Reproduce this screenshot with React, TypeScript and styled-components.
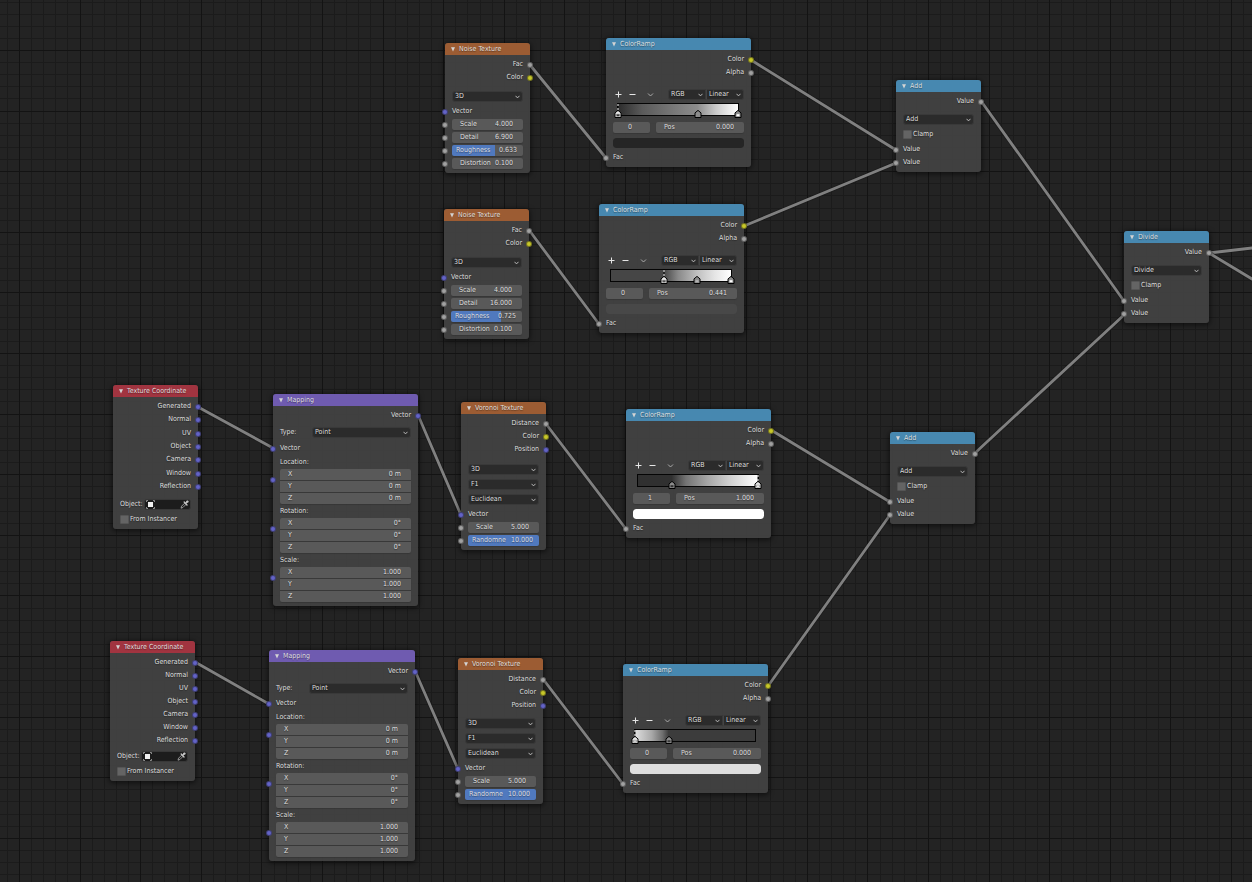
import React, { useState } from 'react';
import styled, { createGlobalStyle, css } from 'styled-components';

const GlobalStyle = createGlobalStyle`
  *, *::before, *::after { box-sizing: border-box; }
  html, body { margin: 0; padding: 0; background: #232323; }
  body, button, input, select {
    font-family: "DejaVu Sans Condensed", "DejaVu Sans", sans-serif;
    font-size: 7px;
    line-height: 9px;
    color: #dedede;
  }
  button, input, select { margin: 0; padding: 0; border: 0; background: none; border-radius: 0; }
`;

const palette = {
  texture: '#9c5c33',
  converter: '#4788b0',
  input: '#a13440',
  vector: '#6f5bb0',
  value: '#a1a1a1',
  color: '#c7c729',
  vec: '#6363c7',
};

type SocketKind = 'value' | 'color' | 'vec';

/* ---------- canvas ---------- */

const Canvas = styled.main`
  position: relative;
  width: 100%;
  min-height: 100vh;
  overflow: hidden;
  background: #232323;
`;

const Backdrop = styled.svg`
  position: absolute;
  inset: 0;
  width: 100%;
  height: 100%;
`;

const NodeFrame = styled.section<{ $x: number; $y: number; $w: number }>`
  position: absolute;
  left: ${p => p.$x}px;
  top: ${p => p.$y}px;
  width: ${p => p.$w}px;
  border-radius: 3px;
  background: rgba(66, 66, 66, 0.94);
  box-shadow: 0 1px 5px 1px rgba(0, 0, 0, 0.55);
  text-shadow: 0 1px 1px rgba(0, 0, 0, 0.4);
`;

const NodeHeader = styled.header<{ $color: string }>`
  display: flex;
  align-items: center;
  gap: 3px;
  height: 12px;
  padding-left: 5px;
  border-radius: 3px 3px 0 0;
  background: ${p => p.$color};
`;

const NodeTitle = styled.h2`
  margin: 0;
  font-size: 7px;
  font-weight: 400;
  white-space: nowrap;
`;

const CollapseButton = styled.button`
  display: flex;
  width: 6px;
  height: 6px;
  svg { width: 6px; height: 6px; }
`;

const NodeBody = styled.div`
  display: flex;
  flex-direction: column;
  padding: 3px 7px;
`;

const OutputList = styled.div<{ $height?: number; $gap: number }>`
  display: flex;
  flex-direction: column;
  justify-content: space-between;
  height: ${p => (p.$height ? `${p.$height}px` : 'auto')};
  margin-bottom: ${p => p.$gap}px;
`;

const Row = styled.div<{ $end?: boolean; $after?: number }>`
  position: relative;
  display: flex;
  flex: none;
  align-items: center;
  justify-content: ${p => (p.$end ? 'flex-end' : 'flex-start')};
  height: 13px;
  margin-bottom: ${p => p.$after ?? 0}px;
  white-space: nowrap;
`;

const GroupLabel = styled.div`
  display: flex;
  flex: none;
  align-items: center;
  height: 12px;
`;

const Socket = styled.i<{ $kind: SocketKind; $side: 'in' | 'out' }>`
  position: absolute;
  top: 4px;
  ${p => (p.$side === 'in' ? 'left: -10px;' : 'right: -10px;')}
  width: 6px;
  height: 6px;
  border: 1px solid rgba(20, 20, 20, 0.45);
  border-radius: 50%;
  background: ${p => palette[p.$kind]};
`;

/* ---------- fields ---------- */

const SelectBox = styled.span<{ $width?: string; $joined?: 'left' | 'right' }>`
  position: relative;
  display: flex;
  width: ${p => p.$width ?? '100%'};
  height: 11px;
  border: 1px solid #393939;
  border-radius: 3px;
  background: #2b2b2b;
  ${p => p.$joined === 'left' && css`border-radius: 3px 0 0 3px;`}
  ${p => p.$joined === 'right' && css`border-radius: 0 3px 3px 0; border-left-color: #444;`}
  svg {
    position: absolute;
    right: 2px;
    top: 3px;
    width: 5px;
    height: 4px;
    pointer-events: none;
  }
`;

const NativeSelect = styled.select`
  width: 100%;
  height: 9px;
  padding-left: 2px;
  appearance: none;
  outline: none;
  text-shadow: inherit;
`;

const FieldBox = styled.label<{ $fill?: number; $grouped?: boolean }>`
  display: flex;
  align-items: center;
  width: 100%;
  height: 11px;
  padding: ${p => (p.$fill ? '0 6px 0 4px' : '0 10px 0 8px')};
  border-radius: ${p => (p.$grouped ? 0 : 2)}px;
  background: ${p =>
    p.$fill
      ? `linear-gradient(90deg, #5079be ${p.$fill}%, #595959 ${p.$fill}%)`
      : '#595959'};
  box-shadow: 0 1px 1px rgba(0, 0, 0, 0.15);
  span { flex: none; }
`;

const FieldInput = styled.input<{ $center?: boolean }>`
  flex: 1;
  width: 0;
  min-width: 0;
  height: 9px;
  outline: none;
  text-align: ${p => (p.$center ? 'center' : 'right')};
  text-shadow: inherit;
`;

const IndexBox = styled(FieldBox)`
  flex: none;
  width: 37px;
  padding: 0 3px 0 0;
`;

const CheckLabel = styled.label`
  display: flex;
  align-items: center;
  gap: 1px;
`;

const CheckInput = styled.input`
  width: 9px;
  height: 9px;
  appearance: none;
  border: 1px solid #555;
  border-radius: 1px;
  background: #646464;
  &:checked { background: #5079be; }
`;

const VectorStack = styled.div`
  position: relative;
  display: flex;
  flex: none;
  flex-direction: column;
  gap: 1px;
  margin: 1px 0;
  border-radius: 2px;
  background: #424242;
  label:first-child { border-radius: 2px 2px 0 0; }
  label:nth-child(3) { border-radius: 0 0 2px 2px; }
`;

const StackSocket = styled(Socket)`
  top: 8px;
`;

const TypeName = styled.span`
  flex: 1;
`;

const ObjectLabel = styled.label`
  display: flex;
  align-items: center;
  justify-content: space-between;
  width: 100%;
`;

const ObjectBox = styled.span`
  display: flex;
  align-items: center;
  width: 47px;
  height: 11px;
  padding: 0 1px;
  border: 1px solid #383838;
  border-radius: 3px;
  background: #1c1c1c;
  svg { flex: none; width: 9px; height: 9px; }
`;

const Eyedropper = styled.button`
  display: flex;
  width: 9px;
  height: 9px;
`;

/* ---------- colour ramp ---------- */

const RampTools = styled.div`
  display: flex;
  align-items: center;
  height: 13px;
  margin-bottom: 2px;
`;

const ToolButton = styled.button<{ $gap?: number }>`
  display: flex;
  width: 9px;
  height: 9px;
  margin-left: ${p => p.$gap ?? 0}px;
  svg { width: 9px; height: 9px; }
`;

const RampSelects = styled.div`
  display: flex;
  width: 76px;
  margin-left: auto;
`;

const RampBar = styled.div<{ $gradient: string }>`
  position: relative;
  height: 13px;
  margin: 0 5px 6px 4px;
  border: 1px solid #050505;
  background: ${p => p.$gradient};
`;

const RampStop = styled.button<{ $at: number }>`
  position: absolute;
  left: calc(${p => p.$at}% - 4px);
  top: -1px;
  width: 8px;
  height: 17px;
  svg { display: block; width: 8px; height: 17px; }
`;

const RampFields = styled.div`
  display: flex;
  align-items: center;
  gap: 6px;
  height: 11px;
  margin-bottom: 5px;
`;

const Swatch = styled.input`
  display: block;
  width: 100%;
  height: 10px;
  margin-bottom: 3px;
  appearance: none;
  border-radius: 3px;
  overflow: hidden;
  &::-webkit-color-swatch-wrapper { padding: 0; }
  &::-webkit-color-swatch { border: 0; border-radius: 3px; }
`;

/* ---------- icons ---------- */

const Chevron = () => (
  <svg viewBox="0 0 5 4" aria-hidden="true">
    <path d="M0.5 0.8 2.5 2.9 4.5 0.8" fill="none" stroke="#c8c8c8" strokeWidth="0.9" />
  </svg>
);

const Triangle = () => (
  <svg viewBox="0 0 6 6" aria-hidden="true">
    <path d="M1 1.2h4L3 5.6z" fill="#d4d4d4" />
  </svg>
);

const ObjectIcon = () => (
  <svg viewBox="0 0 9 9" aria-hidden="true">
    <path d="M2 2h5v5H2z" fill="#f0f0f0" />
    <path d="M.5 2V.5H2M7 .5h1.5V2M8.5 7v1.5H7M2 8.5H.5V7" fill="none" stroke="#a8a8a8" strokeWidth="0.8" />
  </svg>
);

const DropperIcon = () => (
  <svg viewBox="0 0 9 9" aria-hidden="true">
    <path d="M1 8.2 1.6 6.2 4.6 3.2 5.9 4.5 2.9 7.5z" fill="none" stroke="#b4b4b4" strokeWidth="0.8" />
    <path d="M4.2 2.1 7 4.9M5.5 3.5 7.4 1.6" fill="none" stroke="#c4c4c4" strokeWidth="1.4" strokeLinecap="round" />
    <circle cx="7.4" cy="1.6" r="1.2" fill="#c4c4c4" />
  </svg>
);

/* ---------- building blocks ---------- */

interface NodeProps {
  title: string;
  color: string;
  x: number;
  y: number;
  w?: number;
  children: React.ReactNode;
}

function Node({ title, color, x, y, w = 85, children }: NodeProps) {
  return (
    <NodeFrame $x={x} $y={y} $w={w} aria-label={title}>
      <NodeHeader $color={color}>
        <CollapseButton type="button" aria-label={`Collapse ${title}`}>
          <Triangle />
        </CollapseButton>
        <NodeTitle>{title}</NodeTitle>
      </NodeHeader>
      <NodeBody>{children}</NodeBody>
    </NodeFrame>
  );
}

function Output({ name, kind }: { name: string; kind: SocketKind }) {
  return (
    <Row $end>
      {name}
      <Socket $kind={kind} $side="out" />
    </Row>
  );
}

function Input({ name, kind, after }: { name: string; kind: SocketKind; after?: number }) {
  return (
    <Row $after={after}>
      {name}
      <Socket $kind={kind} $side="in" />
    </Row>
  );
}

interface DropdownProps {
  label: string;
  value: string;
  width?: string;
  joined?: 'left' | 'right';
}

function Dropdown({ label, value, width, joined }: DropdownProps) {
  return (
    <SelectBox $width={width} $joined={joined}>
      <NativeSelect aria-label={label} defaultValue={value}>
        <option>{value}</option>
      </NativeSelect>
      <Chevron />
    </SelectBox>
  );
}

interface FieldProps {
  name: string;
  value: string;
  fill?: number;
  grouped?: boolean;
}

function Field({ name, value, fill, grouped }: FieldProps) {
  const [text, setText] = useState(value);
  return (
    <FieldBox $fill={fill} $grouped={grouped}>
      <span>{name}</span>
      <FieldInput value={text} onChange={e => setText(e.target.value)} />
    </FieldBox>
  );
}

function FieldInputRow(props: FieldProps) {
  return (
    <Row>
      <Field {...props} />
      <Socket $kind="value" $side="in" />
    </Row>
  );
}

/* ---------- nodes ---------- */

interface Place {
  x: number;
  y: number;
}

function NoiseNode({ x, y, detail, roughness, fill }: Place & { detail: string; roughness: string; fill: number }) {
  return (
    <Node title="Noise Texture" color={palette.texture} x={x} y={y}>
      <OutputList $gap={6}>
        <Output name="Fac" kind="value" />
        <Output name="Color" kind="color" />
      </OutputList>
      <Row $after={2}><Dropdown label="Dimensions" value="3D" /></Row>
      <Input name="Vector" kind="vec" />
      <FieldInputRow name="Scale" value="4.000" />
      <FieldInputRow name="Detail" value={detail} />
      <FieldInputRow name="Roughness" value={roughness} fill={fill} />
      <FieldInputRow name="Distortion" value="0.100" />
    </Node>
  );
}

function VoronoiNode({ x, y, gap }: Place & { gap: number }) {
  return (
    <Node title="Voronoi Texture" color={palette.texture} x={x} y={y}>
      <OutputList $gap={gap}>
        <Output name="Distance" kind="value" />
        <Output name="Color" kind="color" />
        <Output name="Position" kind="vec" />
      </OutputList>
      <Row $after={2}><Dropdown label="Dimensions" value="3D" /></Row>
      <Row $after={2}><Dropdown label="Feature" value="F1" /></Row>
      <Row $after={2}><Dropdown label="Distance metric" value="Euclidean" /></Row>
      <Input name="Vector" kind="vec" />
      <FieldInputRow name="Scale" value="5.000" />
      <FieldInputRow name="Randomne" value="10.000" fill={100} />
    </Node>
  );
}

function MathNode({ x, y, operation }: Place & { operation: string }) {
  return (
    <Node title={operation} color={palette.converter} x={x} y={y}>
      <OutputList $gap={5}>
        <Output name="Value" kind="value" />
      </OutputList>
      <Row $after={2}><Dropdown label="Operation" value={operation} /></Row>
      <Row $after={2}>
        <CheckLabel><CheckInput type="checkbox" />Clamp</CheckLabel>
      </Row>
      <Input name="Value" kind="value" />
      <Input name="Value" kind="value" />
    </Node>
  );
}

function TextureCoordinateNode({ x, y, outputHeight }: Place & { outputHeight: number }) {
  return (
    <Node title="Texture Coordinate" color={palette.input} x={x} y={y}>
      <OutputList $gap={5} $height={outputHeight}>
        {['Generated', 'Normal', 'UV', 'Object', 'Camera', 'Window', 'Reflection'].map(name => (
          <Output key={name} name={name} kind="vec" />
        ))}
      </OutputList>
      <Row $after={2}>
        <ObjectLabel>
          Object:
          <ObjectBox>
            <ObjectIcon />
            <FieldInput defaultValue="" />
            <Eyedropper type="button" aria-label="Pick object"><DropperIcon /></Eyedropper>
          </ObjectBox>
        </ObjectLabel>
      </Row>
      <Row>
        <CheckLabel><CheckInput type="checkbox" />From Instancer</CheckLabel>
      </Row>
    </Node>
  );
}

function VectorGroup({ name, values }: { name: string; values: string[] }) {
  return (
    <>
      <GroupLabel>{name}:</GroupLabel>
      <VectorStack>
        {['X', 'Y', 'Z'].map((axis, i) => (
          <Field key={axis} name={axis} value={values[i]} grouped />
        ))}
        <StackSocket $kind="vec" $side="in" />
      </VectorStack>
    </>
  );
}

function MappingNode({ x, y, w, typeGap }: Place & { w: number; typeGap: number }) {
  return (
    <Node title="Mapping" color={palette.vector} x={x} y={y} w={w}>
      <OutputList $gap={4}>
        <Output name="Vector" kind="vec" />
      </OutputList>
      <Row $after={typeGap}>
        <TypeName>Type:</TypeName>
        <Dropdown label="Type" value="Point" width="99px" />
      </Row>
      <Input name="Vector" kind="vec" after={1} />
      <VectorGroup name="Location" values={['0 m', '0 m', '0 m']} />
      <VectorGroup name="Rotation" values={['0°', '0°', '0°']} />
      <VectorGroup name="Scale" values={['1.000', '1.000', '1.000']} />
    </Node>
  );
}

interface Stop {
  at: number;
  color: string;
}

interface RampProps extends Place {
  index: number;
  pos: string;
  swatch: string;
  stops: Stop[];
  gradient: string;
}

function ColorRampNode({ x, y, index, pos, swatch, stops, gradient }: RampProps) {
  return (
    <Node title="ColorRamp" color={palette.converter} x={x} y={y} w={145}>
      <OutputList $gap={9}>
        <Output name="Color" kind="color" />
        <Output name="Alpha" kind="value" />
      </OutputList>
      <RampTools>
        <ToolButton type="button" $gap={1} aria-label="Add stop">
          <svg viewBox="0 0 9 9"><path d="M4.5 1.5v6M1.5 4.5h6" stroke="#e6e6e6" /></svg>
        </ToolButton>
        <ToolButton type="button" $gap={5} aria-label="Remove stop">
          <svg viewBox="0 0 9 9"><path d="M1.5 4.5h6" stroke="#e6e6e6" /></svg>
        </ToolButton>
        <ToolButton type="button" $gap={9} aria-label="Ramp tools">
          <svg viewBox="0 0 9 9"><path d="M2 3.5 4.5 6 7 3.5" fill="none" stroke="#b4b4b4" strokeWidth="0.9" /></svg>
        </ToolButton>
        <RampSelects>
          <Dropdown label="Color mode" value="RGB" width="38px" joined="left" />
          <Dropdown label="Interpolation" value="Linear" width="38px" joined="right" />
        </RampSelects>
      </RampTools>
      <RampBar $gradient={gradient}>
        {stops.map((stop, i) => {
          const active = i === index;
          return (
            <RampStop key={stop.at} type="button" $at={stop.at} aria-label={`Stop ${i}`}>
              <svg viewBox="0 0 8 17">
                {active && (
                  <>
                    <path d="M4 0v8" stroke="#000" />
                    <path d="M4 1v7" stroke="#fff" strokeDasharray="2 2" />
                  </>
                )}
                <path
                  d="M1 14.5V9.9L4 7.4 7 9.9v4.6z"
                  fill={active ? '#e8e8e8' : '#8c8c8c'}
                  stroke="#000"
                />
                <path
                  d="M2.5 11.2h3v2h-3z"
                  fill={stop.color}
                  stroke={active ? '#8c8c8c' : 'none'}
                  strokeWidth="0.6"
                />
              </svg>
            </RampStop>
          );
        })}
      </RampBar>
      <RampFields>
        <IndexBox>
          <FieldInput $center aria-label="Stop index" defaultValue={String(index)} />
        </IndexBox>
        <Field name="Pos" value={pos} />
      </RampFields>
      <Swatch type="color" aria-label="Stop color" defaultValue={swatch} />
      <Input name="Fac" kind="value" />
    </Node>
  );
}

/* ---------- backdrop drawing ---------- */

const GRID = 60.6;

function gridLines(origin: number, extent: number) {
  const lines: { at: number; major: boolean }[] = [];
  for (let i = -5; origin + (i * GRID) / 5 < extent; i += 1) {
    lines.push({ at: Math.round(origin + (i * GRID) / 5), major: i % 5 === 0 });
  }
  return lines;
}

const columns = gridLines(19, 2600);
const rows = gridLines(50, 1700);

const links: [number, number, number, number][] = [
  [530, 65, 606, 158],
  [529, 230, 599, 324],
  [751, 60, 896, 150],
  [744, 226, 896, 163],
  [981, 101, 1124, 301],
  [198, 407, 273, 448],
  [418, 415, 461, 515],
  [546, 424, 626, 529],
  [771, 430, 890, 502],
  [768, 686, 890, 515],
  [975, 453, 1124, 315],
  [195, 662, 269, 704],
  [415, 671, 458, 769],
  [543, 679, 623, 784],
  [1209, 253, 1252, 248],
  [1209, 253, 1252, 279],
];

function GridAndLinks() {
  return (
    <Backdrop aria-hidden="true">
      <g shapeRendering="crispEdges">
        {[false, true].map(major => (
          <g key={String(major)} fill={major ? '#131313' : '#1b1b1b'}>
            {columns.filter(l => l.major === major).map(l => (
              <rect key={`c${l.at}`} x={l.at} y={0} width={1} height="100%" />
            ))}
            {rows.filter(l => l.major === major).map(l => (
              <rect key={`r${l.at}`} x={0} y={l.at} width="100%" height={1} />
            ))}
          </g>
        ))}
      </g>
      {links.map(([x1, y1, x2, y2]) => (
        <g key={`${x1}-${y1}-${y2}`} strokeLinecap="round">
          <line x1={x1} y1={y1} x2={x2} y2={y2} stroke="#151515" strokeOpacity="0.5" strokeWidth="4.4" />
          <line x1={x1} y1={y1} x2={x2} y2={y2} stroke="#808080" strokeWidth="2.8" />
        </g>
      ))}
    </Backdrop>
  );
}

export default function App() {
  return (
    <>
      <GlobalStyle />
      <Canvas>
        <GridAndLinks />
        <NoiseNode x={445} y={43} detail="6.900" roughness="0.633" fill={61} />
        <NoiseNode x={444} y={209} detail="16.000" roughness="0.725" fill={71} />
        <ColorRampNode
          x={606} y={38} index={0} pos="0.000" swatch="#252525"
          stops={[{ at: 0, color: '#252525' }, { at: 67, color: '#8c8c8c' }, { at: 100, color: '#ffffff' }]}
          gradient="linear-gradient(90deg, #2c2c2c 0%, #5a5a5a 20%, #7c7c7c 50%, #8c8c8c 66%, #cccccc 82%, #ffffff 100%)"
        />
        <ColorRampNode
          x={599} y={204} index={0} pos="0.441" swatch="#484848"
          stops={[{ at: 44, color: '#464646' }, { at: 72, color: '#b4b4b4' }, { at: 100, color: '#ffffff' }]}
          gradient="linear-gradient(90deg, #464646 44%, #8a8a8a 56%, #c0c0c0 72%, #e4e4e4 86%, #ffffff 100%)"
        />
        <ColorRampNode
          x={626} y={409} index={1} pos="1.000" swatch="#ffffff"
          stops={[{ at: 28, color: '#303030' }, { at: 100, color: '#ffffff' }]}
          gradient="linear-gradient(90deg, #303030 28%, #747474 40%, #a6a6a6 58%, #d4d4d4 78%, #ffffff 100%)"
        />
        <ColorRampNode
          x={623} y={664} index={0} pos="0.000" swatch="#dedede"
          stops={[{ at: 0, color: '#dedede' }, { at: 28, color: '#3c3c3c' }]}
          gradient="linear-gradient(90deg, #dedede 0%, #a8a8a8 14%, #6e6e6e 23%, #3c3c3c 28%)"
        />
        <MathNode x={896} y={80} operation="Add" />
        <MathNode x={1124} y={231} operation="Divide" />
        <MathNode x={890} y={432} operation="Add" />
        <TextureCoordinateNode x={113} y={385} outputHeight={93} />
        <MappingNode x={273} y={394} w={145} typeGap={3} />
        <VoronoiNode x={461} y={402} gap={7} />
        <TextureCoordinateNode x={110} y={641} outputHeight={89} />
        <MappingNode x={269} y={650} w={146} typeGap={2} />
        <VoronoiNode x={458} y={658} gap={5} />
      </Canvas>
    </>
  );
}
